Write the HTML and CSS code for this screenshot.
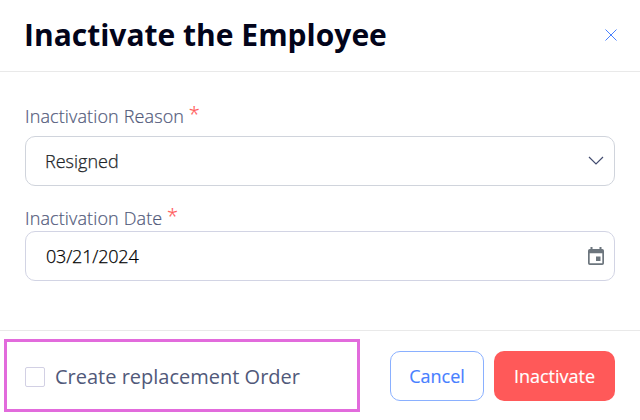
FILE: index.html
```html
<!DOCTYPE html>
<html lang="en">
<head>
  <meta charset="UTF-8">
  <meta name="viewport" content="width=device-width, initial-scale=1.0">
  <title>Inactivate the Employee</title>
  <link rel="stylesheet" href="styles.css">
</head>
<body>
  <div class="modal">
    <header class="modal-header">
      <h1>Inactivate the Employee</h1>
      <button class="close" type="button" aria-label="Close">
        <svg width="12" height="12" viewBox="0 0 12 12"><path d="M0.5 0.5L11.5 11.5M11.5 0.5L0.5 11.5"/></svg>
      </button>
    </header>

    <div class="modal-body">
      <div class="form-group">
        <div class="label">Inactivation Reason <span class="required">*</span></div>
        <div class="field field-select">
          <span>Resigned</span>
          <svg class="chevron" width="16" height="10" viewBox="0 0 16 10"><path d="M1 1L8 8L15 1"/></svg>
        </div>
      </div>

      <div class="form-group">
        <div class="label">Inactivation Date <span class="required">*</span></div>
        <div class="field field-date">
          <span>03/21/2024</span>
          <svg class="calendar" width="16" height="18" viewBox="0 0 16 18"><path fill-rule="evenodd" d="M2.5 0H4.5v2h7V0H13.5v2h.7A1.8 1.8 0 0 1 16 3.8V16.2A1.8 1.8 0 0 1 14.2 18H1.8A1.8 1.8 0 0 1 0 16.2V3.8A1.8 1.8 0 0 1 1.8 2H2.5zM1.7 6.2V16.3H14.3V6.2zM8 9.5h4.5V14H8z"/></svg>
        </div>
      </div>
    </div>

    <footer class="modal-footer">
      <label class="highlight">
        <input type="checkbox" class="checkbox">
        <span>Create replacement Order</span>
      </label>
      <div class="actions">
        <button class="btn btn-outline" type="button">Cancel</button>
        <button class="btn btn-danger" type="button">Inactivate</button>
      </div>
    </footer>
  </div>
</body>
</html>
```
FILE: styles.css
```css
:root {
  --blue: #4880ff;
  --danger: #ff5959;
  --text: #51597a;
  --line: #e9e9e9;
  --highlight: #e26bdc;
}

* {
  box-sizing: border-box;
  margin: 0;
  padding: 0;
}

body {
  font-family: "Open Sans", "Noto Sans", sans-serif;
  background: #fff;
  color: var(--text);
}

.modal {
  display: flex;
  flex-direction: column;
  width: 640px;
  height: 420px;
  overflow: hidden;
}

.modal-header {
  display: flex;
  justify-content: space-between;
  align-items: center;
  height: 72px;
  padding: 0 23px 2px 24px;
  border-bottom: 1px solid var(--line);
}

h1 {
  font-size: 30px;
  font-weight: 700;
  line-height: 40px;
  color: #02041a;
}

.close {
  display: flex;
  border: none;
  background: none;
  cursor: pointer;
}

.close svg {
  fill: none;
  stroke: var(--blue);
  stroke-width: 1;
}

.modal-body {
  flex: 1;
  padding: 34px 25px 0;
}

.form-group + .form-group {
  margin-top: 20px;
}

.label {
  height: 30px;
  font-size: 18px;
  font-weight: 300;
  line-height: 20px;
  letter-spacing: 0.12px;
  white-space: nowrap;
  -webkit-text-stroke: 0.2px;
}

.form-group + .form-group .label {
  height: 25px;
  line-height: 24px;
}

.required {
  font-size: 20px;
  line-height: 0;
  vertical-align: 2px;
  color: var(--danger);
}

.field {
  display: flex;
  justify-content: space-between;
  align-items: center;
  height: 50px;
  border: 1px solid #d0d4dc;
  border-radius: 10px;
  font-size: 18px;
  font-weight: 300;
}

.field span {
  -webkit-text-stroke: 0.25px;
}

.field-select {
  padding: 0 10px 0 19px;
  color: #212529;
}

.field-date {
  padding: 0 10px 0 20px;
  border-color: #d2d4e4;
  letter-spacing: -0.2px;
  color: #000;
}

.chevron {
  margin-bottom: 1px;
  fill: none;
  stroke: #434c70;
  stroke-width: 1.2;
}

.calendar {
  fill: #6c757d;
}

.modal-footer {
  display: flex;
  justify-content: space-between;
  align-items: flex-start;
  height: 90px;
  padding: 8px 25px 0 4px;
  border-top: 1px solid var(--line);
}

.highlight {
  display: flex;
  align-items: center;
  gap: 10px;
  width: 356px;
  height: 73px;
  padding: 2px 0 0 18px;
  border: 3px solid var(--highlight);
  font-size: 20px;
}

.checkbox {
  appearance: none;
  width: 20px;
  height: 20px;
  border: 1px solid #d2d0e4;
  border-radius: 2px;
}

.actions {
  display: flex;
  gap: 10px;
  padding-top: 12px;
}

.btn {
  height: 50px;
  border: 1px solid transparent;
  border-radius: 10px;
  font-family: inherit;
  font-size: 18px;
  cursor: pointer;
  -webkit-text-stroke: 0.15px;
}

.btn-outline {
  width: 94px;
  border-color: #8ab0ff;
  background: #fff;
  color: var(--blue);
}

.btn-danger {
  width: 121px;
  background: var(--danger);
  color: #fff;
}
```
